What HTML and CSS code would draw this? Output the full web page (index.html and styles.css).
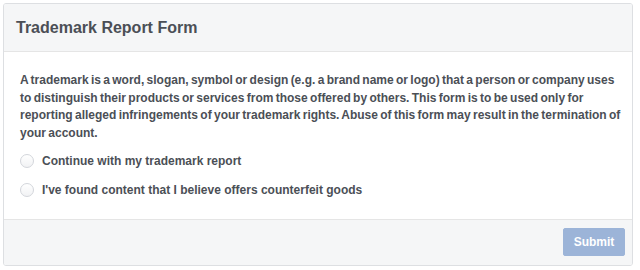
FILE: index.html
```html
<!DOCTYPE html>
<html>
<head>
<meta charset="utf-8">
<link rel="stylesheet" href="styles.css">
</head>
<body>
<div class="dialog">
  <div class="header"><h2 class="title">Trademark Report Form</h2></div>
  <div class="content">
    <p class="intro">A trademark is a word, slogan, symbol or design (e.g. a brand name or logo) that a person or company uses to distinguish their products or services from those offered by others. This form is to be used only for reporting alleged infringements of your trademark rights. Abuse of this form may result in the termination of your account.</p>
    <label class="option"><span class="radio"></span><span>Continue with my trademark report</span></label>
    <label class="option"><span class="radio"></span><span>I've found content that I believe offers counterfeit goods</span></label>
  </div>
  <div class="footer"><button class="submit" disabled>Submit</button></div>
</div>
</body>
</html>
```
FILE: styles.css
```css
html, body { margin: 0; padding: 0; background: #fff; }
body { padding: 3px 6px 0 3px; font-family: "Liberation Sans", Arial, sans-serif; }
.dialog {
  width: 628px;
  border: 1px solid #dddfe2;
  border-radius: 3px;
  box-sizing: content-box;
  overflow: hidden;
}
.header {
  height: 48px;
  background: #f5f6f7;
  border-bottom: 1px solid #e5e5e5;
  display: flex;
  align-items: center;
  padding: 1px 0 0 12px;
  box-sizing: border-box;
}
.title { margin: 0; font-size: 16px; font-weight: bold; color: #4b4f56; }
.content { padding: 20px 8px 0 16px; height: 167px; box-sizing: border-box; }
.intro { margin: 0 0 4px 0; font-size: 12px; line-height: 17.7px; font-weight: bold; color: #4b4f56; word-spacing: -1px; }
.option { display: flex; align-items: center; height: 29px; font-size: 12px; font-weight: bold; color: #4b4f56; }
.radio {
  width: 12px; height: 12px; border-radius: 50%;
  border: 1px solid #d3d6db; background: linear-gradient(#fff, #f1f2f4);
  margin: 0 8px 0 0; flex: none;
}
.footer {
  height: 46px;
  background: #f5f6f7;
  border-top: 1px solid #e5e5e5;
  display: flex; align-items: center; justify-content: flex-end;
  padding: 0 7px 1px 0;
  box-sizing: border-box;
}
.submit {
  width: 62px; height: 28px;
  background: #9cb4d8; border: 1px solid #9cb4d8; border-radius: 2px;
  color: #fff; font-family: "Liberation Sans", Arial, sans-serif; font-size: 12px; font-weight: bold;
  padding: 0;
}
```
